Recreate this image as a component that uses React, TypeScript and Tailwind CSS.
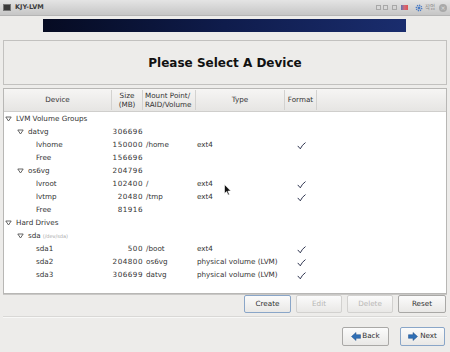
import React from 'react';

type Row = {
  level: 0 | 1 | 2;
  name: string;
  expander?: boolean;
  note?: string;
  size?: string;
  mount?: string;
  type?: string;
  format?: boolean;
};

const rows: Row[] = [
  { level: 0, name: 'LVM Volume Groups', expander: true },
  { level: 1, name: 'datvg', expander: true, size: '306696' },
  { level: 2, name: 'lvhome', size: '150000', mount: '/home', type: 'ext4', format: true },
  { level: 2, name: 'Free', size: '156696' },
  { level: 1, name: 'os6vg', expander: true, size: '204796' },
  { level: 2, name: 'lvroot', size: '102400', mount: '/', type: 'ext4', format: true },
  { level: 2, name: 'lvtmp', size: '20480', mount: '/tmp', type: 'ext4', format: true },
  { level: 2, name: 'Free', size: '81916' },
  { level: 0, name: 'Hard Drives', expander: true },
  { level: 1, name: 'sda', expander: true, note: '(/dev/sda)' },
  { level: 2, name: 'sda1', size: '500', mount: '/boot', type: 'ext4', format: true },
  { level: 2, name: 'sda2', size: '204800', mount: 'os6vg', type: 'physical volume (LVM)', format: true },
  { level: 2, name: 'sda3', size: '306699', mount: 'datvg', type: 'physical volume (LVM)', format: true },
];

const cols = 'grid grid-cols-[108px_31px_53px_89px_32px_1fr]';

function Expander() {
  return (
    <svg width="7" height="6" viewBox="0 0 7 6" className="shrink-0">
      <path d="M0.8 1 L6.2 1 L3.5 5 Z" fill="none" stroke="#555" strokeWidth="0.9" strokeLinejoin="round" />
    </svg>
  );
}

function Check() {
  return (
    <svg width="9" height="8" viewBox="0 0 9 8">
      <path d="M1 4.2 L3.3 6.8 Q5 3 8.2 0.8" fill="none" stroke="#1c2340" strokeWidth="0.9" strokeLinecap="round" />
    </svg>
  );
}

function Arrow({ dir }: { dir: 'left' | 'right' }) {
  return (
    <svg width="10" height="9" viewBox="0 0 10 9" className={dir === 'left' ? '' : 'scale-x-[-1]'}>
      <path d="M0.5 4.5 L5 0.5 L5 2.7 L9.5 2.7 L9.5 6.3 L5 6.3 L5 8.5 Z" fill="#2f6fb5" stroke="#1f4f8a" strokeWidth="0.5" />
    </svg>
  );
}

function TitleBar() {
  return (
    <div className="h-[16px] flex items-center bg-gradient-to-b from-[#e4e4e4] to-[#c6c6c6] border-b border-[#b5b5b5] px-[3px]">
      <div className="w-[8px] h-[7px] bg-[#3a3a3a] border border-[#777]" />
      <span className="ml-[4px] text-[6.5px] font-bold text-[#3c3c3c]">KJY-LVM</span>
      <div className="ml-auto flex items-center gap-[2px]">
        <div className="w-[5px] h-[5px] border border-[#a8a8a8] bg-[#d8d8d8]" />
        <div className="w-[5px] h-[5px] border border-[#a8a8a8] bg-[#d8d8d8]" />
        <div className="ml-[2px] w-[5px] h-[5px] border border-[#a8a8a8]" />
        <div className="ml-[2px] w-[7px] h-[5px] bg-gradient-to-r from-[#5a6fb0] via-[#d06a7a] to-[#e05050]" />
        <svg width="8" height="8" viewBox="0 0 8 8" className="ml-[5px]">
          <circle cx="4" cy="4" r="2.6" fill="none" stroke="#4a7bc4" strokeWidth="1.6" strokeDasharray="1.2 0.8" />
          <circle cx="4" cy="4" r="1.3" fill="#4a7bc4" />
        </svg>
        <span className="text-[5.5px] text-[#8a8a8a] font-['Noto_Sans_CJK_KR',sans-serif] leading-none">작업</span>
        <div className="ml-[2px] w-[8px] h-[8px] rounded-full bg-[#a9a9a9] flex items-center justify-center text-[6px] text-[#e0e0e0] leading-none">×</div>
      </div>
    </div>
  );
}

function Button({ label, disabled, primary, width }: { label: string; disabled?: boolean; primary?: boolean; width: string }) {
  return (
    <div
      className={`${width} h-full flex items-center justify-center rounded-[2px] border text-[7.2px] bg-gradient-to-b from-[#fbfbfb] to-[#e9e8e6] ${
        primary ? 'border-[#8aa6c8]' : disabled ? 'border-[#d2d1cf]' : 'border-[#a9a8a6]'
      } ${disabled ? 'text-[#b8b7b5]' : 'text-[#2e2e2e]'}`}
    >
      {label}
    </div>
  );
}

export default function App() {
  return (
    <div className="w-[450px] h-[352px] bg-[#edecea] flex flex-col overflow-hidden relative font-['DejaVu_Sans',sans-serif] text-[#2e2e2e]">
      <TitleBar />

      <div className="mt-[3px] ml-[43px] w-[363px] h-[13px] bg-gradient-to-r from-[#060b22] via-[#0f1c4c] to-[#1a2d6e]" />

      <div className="mt-[8px] mx-[3px] h-[45px] border border-[#c2c1bf] flex items-center justify-center">
        <span className="text-[12px] font-bold text-[#111]">Please Select A Device</span>
      </div>

      <div className="mt-[3px] mx-[3px] h-[206px] border border-[#b8b7b5] bg-white shadow-[0_1px_0_#c9c8c6]">
        <div className={`${cols} h-[23px] bg-gradient-to-b from-[#f6f5f4] to-[#e6e5e3] border-b border-[#cfcecc] text-[7.2px] text-[#333]`}>
          <div className="flex items-center justify-center border-r border-[#d3d2d0] my-[1px]">Device</div>
          <div className="flex flex-col items-center justify-center leading-[9px] border-r border-[#d3d2d0] my-[1px]">
            <span>Size</span>
            <span>(MB)</span>
          </div>
          <div className="flex flex-col justify-center leading-[9px] pl-[2px] border-r border-[#d3d2d0] my-[1px]">
            <span>Mount Point/</span>
            <span>RAID/Volume</span>
          </div>
          <div className="flex items-center justify-center border-r border-[#d3d2d0] my-[1px]">Type</div>
          <div className="flex items-center justify-center border-r border-[#d3d2d0] my-[1px]">Format</div>
          <div />
        </div>
        <div className="pt-[1px]">
          {rows.map((r, i) => (
            <div key={i} className={`${cols} h-[13px] items-center text-[7.2px] text-[#333]`}>
              <div
                className={`flex items-center gap-[4px] ${
                  r.level === 0 ? 'pl-[1px]' : r.level === 1 ? 'pl-[13px]' : 'pl-[32px]'
                }`}
              >
                {r.expander && <Expander />}
                <span>{r.name}</span>
                {r.note && <span className="text-[5px] text-[#a8a8a8] -ml-[2px]">{r.note}</span>}
              </div>
              <div className="text-right tracking-[0.5px]">{r.size}</div>
              <div className="pl-[3px]">{r.mount}</div>
              <div className="pl-[1px] whitespace-nowrap">{r.type}</div>
              <div className="flex justify-center">{r.format && <Check />}</div>
              <div />
            </div>
          ))}
        </div>
      </div>

      <div className="mt-[1px] h-[18px] flex justify-end gap-[5px] pr-[4px]">
        <Button label="Create" primary width="w-[47px]" />
        <Button label="Edit" disabled width="w-[46px]" />
        <Button label="Delete" disabled width="w-[46px]" />
        <Button label="Reset" width="w-[48px]" />
      </div>

      <div className="mt-[3px] mx-[3px] h-[2px] border-t border-[#d9d8d6] border-b border-b-[#f8f8f7]" />

      <div className="mt-[9px] h-[19px] flex justify-end gap-[11px] pr-[5px]">
        <div className="w-[47px] h-full flex items-center justify-center gap-[1px] rounded-[2px] border border-[#a9a8a6] bg-gradient-to-b from-[#fbfbfb] to-[#e9e8e6] text-[7.2px]">
          <Arrow dir="left" />
          <span>Back</span>
        </div>
        <div className="w-[45px] h-full flex items-center justify-center gap-[2px] rounded-[2px] border border-[#8aa6c8] bg-gradient-to-b from-[#fbfbfb] to-[#e9e8e6] text-[7.2px]">
          <Arrow dir="right" />
          <span>Next</span>
        </div>
      </div>

      <svg width="8" height="12" viewBox="0 0 8 12" className="absolute left-[224px] top-[184px]">
        <path d="M0.5 0.5 L0.5 9.5 L2.6 7.6 L4.1 11 L5.4 10.4 L3.9 7.1 L6.8 7.1 Z" fill="#111" stroke="#fff" strokeWidth="0.6" />
      </svg>
    </div>
  );
}
